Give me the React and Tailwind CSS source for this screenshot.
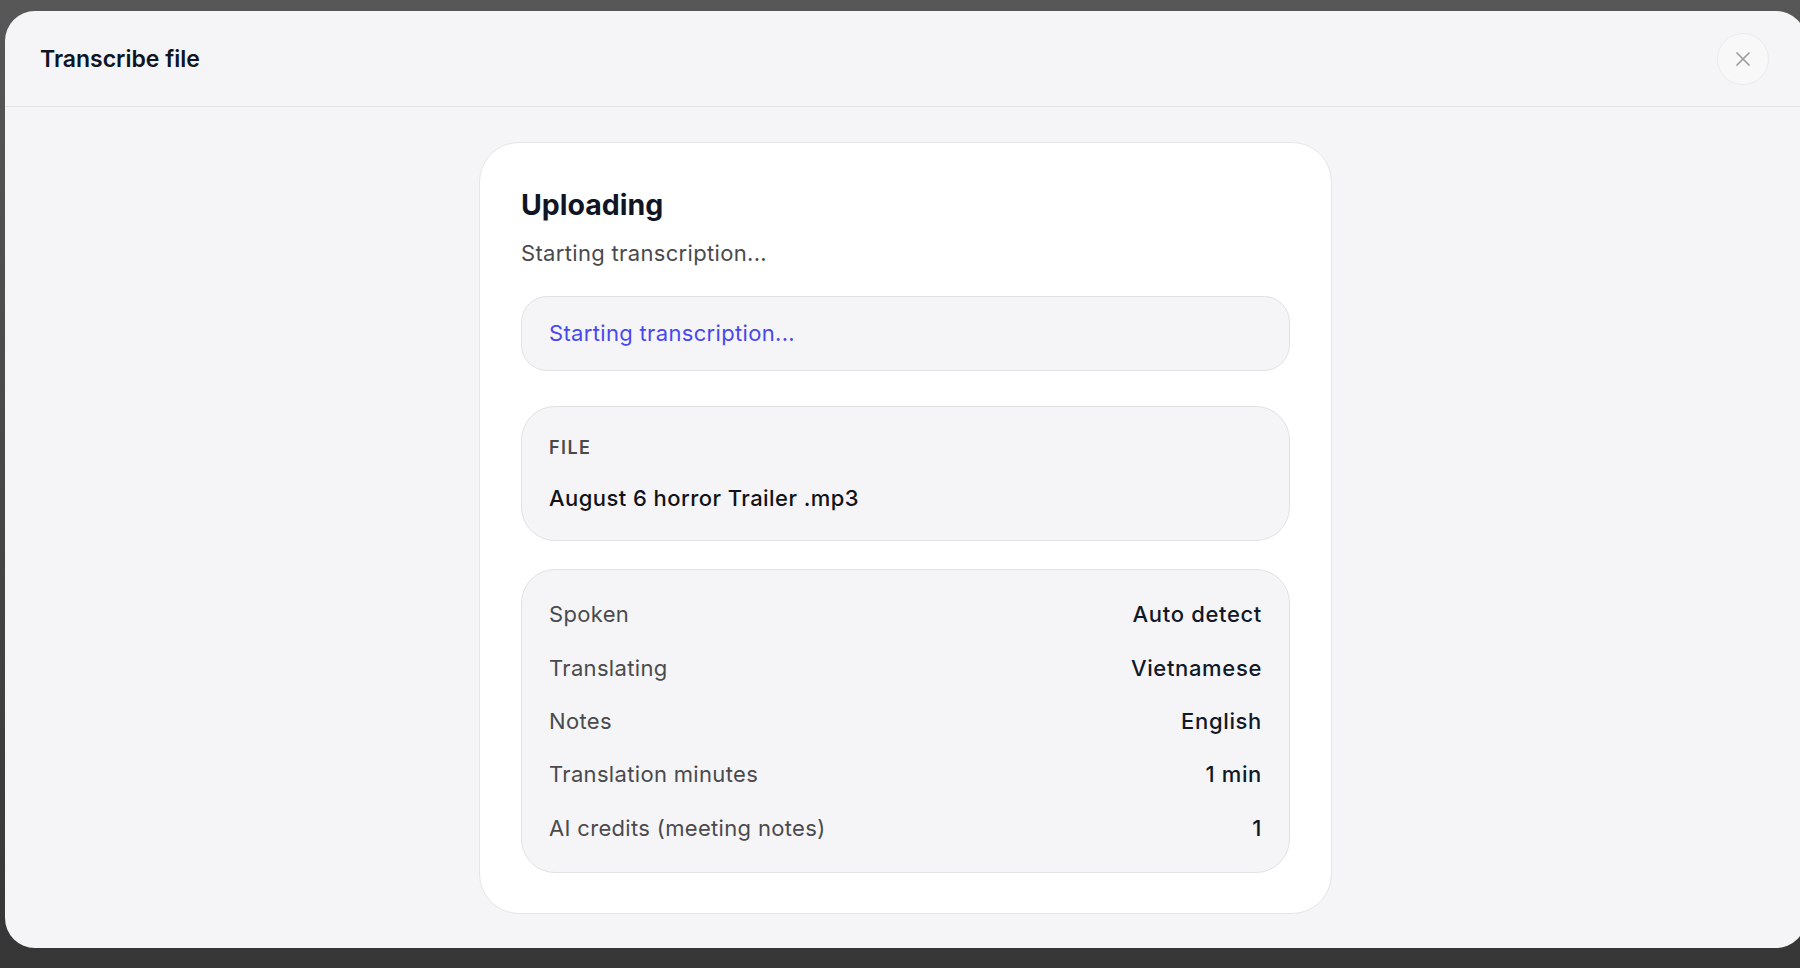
import React from 'react';
import { X } from 'lucide-react';

const details = [
  { label: 'Spoken', value: 'Auto detect' },
  { label: 'Translating', value: 'Vietnamese' },
  { label: 'Notes', value: 'English' },
  { label: 'Translation minutes', value: '1 min' },
  { label: 'AI credits (meeting notes)', value: '1' },
];

const App = () => {
  return (
    <div
      className="w-full h-[968px] overflow-hidden pt-[11px] pl-[5px] bg-gradient-to-b from-[#575757] via-[#474747] to-[#363636]"
      style={{ fontFamily: 'Inter, "Noto Sans", sans-serif' }}
    >
      <div className="w-[1801px] h-[937px] rounded-[30px] bg-[#f5f5f7] flex flex-col overflow-hidden">
        {/* Header */}
        <div className="h-[96px] shrink-0 border-b border-[#e2e2e6] flex items-center justify-between pl-[35px] pr-[37px]">
          <h2 className="pt-[2px] text-[23px] font-semibold text-[#0f1524]">Transcribe file</h2>
          <button className="w-[52px] h-[52px] rounded-full bg-[#f8f8f9] border border-[#ebebed] flex items-center justify-center text-[#9d9d9f]">
            <X size={24} strokeWidth={1.75} />
          </button>
        </div>

        {/* Body */}
        <div className="flex justify-center pt-[35px]">
          <div className="w-[853px] rounded-[40px] bg-white border border-[#e5e5e8] px-[41px] pt-[44px] pb-[40px] flex flex-col">
            <h1 className="text-[28.5px] leading-[36px] font-bold text-[#0f1524]">Uploading</h1>
            <p className="mt-[16px] text-[22px] leading-[28px] tracking-[0.015em] text-[#4a4a4d]">Starting transcription...</p>

            <div className="mt-[29px] h-[75px] rounded-[26px] bg-[#f5f5f7] border border-[#e2e2e6] flex items-center px-[27px]">
              <span className="text-[22px] tracking-[0.015em] text-[#4848ee]">Starting transcription...</span>
            </div>

            <div className="mt-[35px] h-[135px] rounded-[34px] bg-[#f5f5f7] border border-[#e2e2e6] px-[27px] pt-[29px]">
              <div className="text-[18px] leading-[24px] font-semibold tracking-[0.08em] text-[#4a4a4d]">FILE</div>
              <div className="mt-[24px] text-[22px] leading-[28px] font-medium tracking-[0.02em] text-[#111318]">August 6 horror Trailer .mp3</div>
            </div>

            <div className="mt-[28px] rounded-[34px] bg-[#f5f5f7] border border-[#e2e2e6] px-[27px] pt-[18px] pb-[17px]">
              {details.map((row) => (
                <div key={row.label} className="h-[53.4px] flex items-center justify-between">
                  <span className="text-[22px] tracking-[0.015em] text-[#4a4a4d]">{row.label}</span>
                  <span className="text-[22px] font-medium tracking-[0.03em] text-[#111827]">{row.value}</span>
                </div>
              ))}
            </div>
          </div>
        </div>
      </div>
    </div>
  );
};

export default App;
